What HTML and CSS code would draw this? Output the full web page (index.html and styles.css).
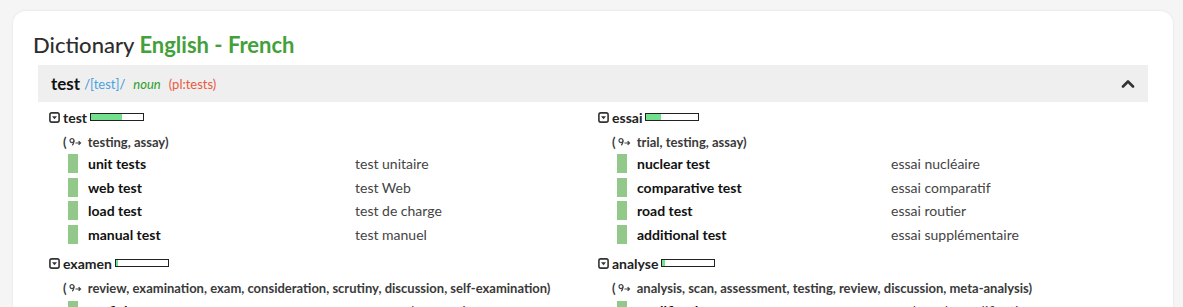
FILE: index.html
```html
<!DOCTYPE html>
<html lang="en">
<head>
<meta charset="utf-8">
<title>Dictionary English - French</title>
<link rel="stylesheet" href="styles.css">
</head>
<body class="page">
<div class="card">
  <h1 class="title">Dictionary <span class="title-lang">English - French</span></h1>
  <div class="entry">
    <div class="entry-head">
      <span class="headword">test</span>
      <span class="phon">/<span class="phon-in">[test]</span>/</span>
      <span class="pos">noun</span>
      <span class="plural">(pl:tests)</span>
      <svg class="chevron" width="14" height="9" viewBox="0 0 14 9"><path d="M2 7.5 L7 2.5 L12 7.5" fill="none" stroke="#333" stroke-width="2.6" stroke-linecap="round" stroke-linejoin="round"/></svg>
    </div>
    <div class="senses">
      <div class="col col-left">
        <div class="sense">
          <div class="sense-head">
            <svg class="toggle" width="11" height="11" viewBox="0 0 11 11"><rect x="0.9" y="0.9" width="9.2" height="9.2" rx="1.8" fill="none" stroke="#333" stroke-width="1.6"/><path d="M3 4.2 H8 L5.5 7.2 Z" fill="#333"/></svg>
            <span class="sense-word">test</span>
            <span class="freq"><span class="freq-fill" style="width:60%"></span></span>
          </div>
          <div class="syn">(<svg class="syn-icon" width="13" height="10" viewBox="0 0 13 10"><circle cx="3" cy="3.6" r="2" fill="none" stroke="#444" stroke-width="1.2"/><path d="M5 3.6 Q5 7 3.2 8.2" fill="none" stroke="#444" stroke-width="1.2"/><path d="M6.5 6 H11.5 M9.6 4.2 L11.5 6 L9.6 7.8" fill="none" stroke="#444" stroke-width="1.2"/></svg> testing, assay)</div>
          <div class="ex"><span class="ex-bar"></span><span class="ex-word">unit tests</span><span class="ex-tr">test unitaire</span></div>
          <div class="ex"><span class="ex-bar"></span><span class="ex-word">web test</span><span class="ex-tr">test Web</span></div>
          <div class="ex"><span class="ex-bar"></span><span class="ex-word">load test</span><span class="ex-tr">test de charge</span></div>
          <div class="ex"><span class="ex-bar"></span><span class="ex-word">manual test</span><span class="ex-tr">test manuel</span></div>
        </div>
        <div class="sense">
          <div class="sense-head">
            <svg class="toggle" width="11" height="11" viewBox="0 0 11 11"><rect x="0.9" y="0.9" width="9.2" height="9.2" rx="1.8" fill="none" stroke="#333" stroke-width="1.6"/><path d="M3 4.2 H8 L5.5 7.2 Z" fill="#333"/></svg>
            <span class="sense-word">examen</span>
            <span class="freq"><span class="freq-fill" style="width:4%"></span></span>
          </div>
          <div class="syn">(<svg class="syn-icon" width="13" height="10" viewBox="0 0 13 10"><circle cx="3" cy="3.6" r="2" fill="none" stroke="#444" stroke-width="1.2"/><path d="M5 3.6 Q5 7 3.2 8.2" fill="none" stroke="#444" stroke-width="1.2"/><path d="M6.5 6 H11.5 M9.6 4.2 L11.5 6 L9.6 7.8" fill="none" stroke="#444" stroke-width="1.2"/></svg> review, examination, exam, consideration, scrutiny, discussion, self-examination)</div>
          <div class="ex"><span class="ex-bar"></span><span class="ex-word">proficiency test</span><span class="ex-tr">examen de compétence</span></div>
        </div>
      </div>
      <div class="col col-right">
        <div class="sense">
          <div class="sense-head">
            <svg class="toggle" width="11" height="11" viewBox="0 0 11 11"><rect x="0.9" y="0.9" width="9.2" height="9.2" rx="1.8" fill="none" stroke="#333" stroke-width="1.6"/><path d="M3 4.2 H8 L5.5 7.2 Z" fill="#333"/></svg>
            <span class="sense-word">essai</span>
            <span class="freq"><span class="freq-fill" style="width:28%"></span></span>
          </div>
          <div class="syn">(<svg class="syn-icon" width="13" height="10" viewBox="0 0 13 10"><circle cx="3" cy="3.6" r="2" fill="none" stroke="#444" stroke-width="1.2"/><path d="M5 3.6 Q5 7 3.2 8.2" fill="none" stroke="#444" stroke-width="1.2"/><path d="M6.5 6 H11.5 M9.6 4.2 L11.5 6 L9.6 7.8" fill="none" stroke="#444" stroke-width="1.2"/></svg> trial, testing, assay)</div>
          <div class="ex"><span class="ex-bar"></span><span class="ex-word">nuclear test</span><span class="ex-tr">essai nucléaire</span></div>
          <div class="ex"><span class="ex-bar"></span><span class="ex-word">comparative test</span><span class="ex-tr">essai comparatif</span></div>
          <div class="ex"><span class="ex-bar"></span><span class="ex-word">road test</span><span class="ex-tr">essai routier</span></div>
          <div class="ex"><span class="ex-bar"></span><span class="ex-word">additional test</span><span class="ex-tr">essai supplémentaire</span></div>
        </div>
        <div class="sense">
          <div class="sense-head">
            <svg class="toggle" width="11" height="11" viewBox="0 0 11 11"><rect x="0.9" y="0.9" width="9.2" height="9.2" rx="1.8" fill="none" stroke="#333" stroke-width="1.6"/><path d="M3 4.2 H8 L5.5 7.2 Z" fill="#333"/></svg>
            <span class="sense-word">analyse</span>
            <span class="freq"><span class="freq-fill" style="width:4%"></span></span>
          </div>
          <div class="syn">(<svg class="syn-icon" width="13" height="10" viewBox="0 0 13 10"><circle cx="3" cy="3.6" r="2" fill="none" stroke="#444" stroke-width="1.2"/><path d="M5 3.6 Q5 7 3.2 8.2" fill="none" stroke="#444" stroke-width="1.2"/><path d="M6.5 6 H11.5 M9.6 4.2 L11.5 6 L9.6 7.8" fill="none" stroke="#444" stroke-width="1.2"/></svg> analysis, scan, assessment, testing, review, discussion, meta-analysis)</div>
          <div class="ex"><span class="ex-bar"></span><span class="ex-word">qualification test</span><span class="ex-tr">analyse de qualification</span></div>
        </div>
      </div>
    </div>
  </div>
</div>
</body>
</html>
```
FILE: styles.css
```css
* { box-sizing: border-box; }

html, body { margin: 0; padding: 0; }

.page {
  background: #f5f5f5;
  font-family: Lato, "Open Sans", "Liberation Sans", sans-serif;
  color: #333;
  padding: 11px 0 0 13px;
  overflow: hidden;
  height: 307px;
}

.card {
  width: 1160px;
  background: #fff;
  border-radius: 13px;
  box-shadow: 0 0 3px rgba(0, 0, 0, 0.08);
  padding: 20px 20px 20px 20px;
  min-height: 400px;
}

.title {
  margin: 0 0 6px 0;
  font-size: 22px;
  line-height: 28px;
  font-weight: 500;
  color: #2d2d2d;
}

.title-lang {
  color: #44a03a;
  font-weight: 700;
}

.entry {
  margin: 0 5px;
}

.entry-head {
  display: flex;
  align-items: center;
  height: 37px;
  background: #efefef;
  padding: 0 13px;
}

.headword {
  font-size: 17px;
  font-weight: 700;
  color: #111;
  margin-right: 4px;
}

.phon {
  font-size: 13px;
  color: #3a8fd6;
  margin-right: 8px;
}

.phon-in { color: #4aa3e0; }

.pos {
  font-size: 13px;
  font-style: italic;
  color: #2ca02c;
  margin-right: 8px;
}

.plural {
  font-size: 13px;
  color: #ea5a3f;
}

.chevron { margin-left: auto; }

.senses {
  display: grid;
  grid-template-columns: 549px 1fr;
  padding: 5px 0 0 11px;
}

.sense { margin-bottom: 7px; }

.sense-head {
  display: flex;
  align-items: center;
  height: 20px;
  font-size: 14px;
  font-weight: 700;
  color: #222;
}

.toggle { margin-right: 3px; }

.freq {
  display: inline-block;
  width: 54px;
  height: 8px;
  border: 1px solid #222;
  margin-left: 3px;
  background: #fff;
}

.freq-fill {
  display: block;
  height: 100%;
  background: #74e08e;
}

.syn {
  display: flex;
  align-items: center;
  height: 20px;
  margin: 5px 0 0 0;
  padding-left: 14px;
  font-size: 13px;
  font-weight: 700;
  color: #3a3a3a;
  white-space: pre;
}

.syn-icon { margin: 0 3px 0 2px; }

.ex {
  display: grid;
  align-items: center;
  height: 23.6px;
  padding-left: 19px;
  font-size: 14px;
}

.col-left .ex { grid-template-columns: 20px 267px 1fr; }
.col-right .ex { grid-template-columns: 20px 254px 1fr; }

.ex-bar {
  width: 10px;
  height: 19px;
  background: #92c98a;
}

.ex-word {
  font-weight: 700;
  color: #111;
}

.ex-tr {
  color: #444;
}
```
